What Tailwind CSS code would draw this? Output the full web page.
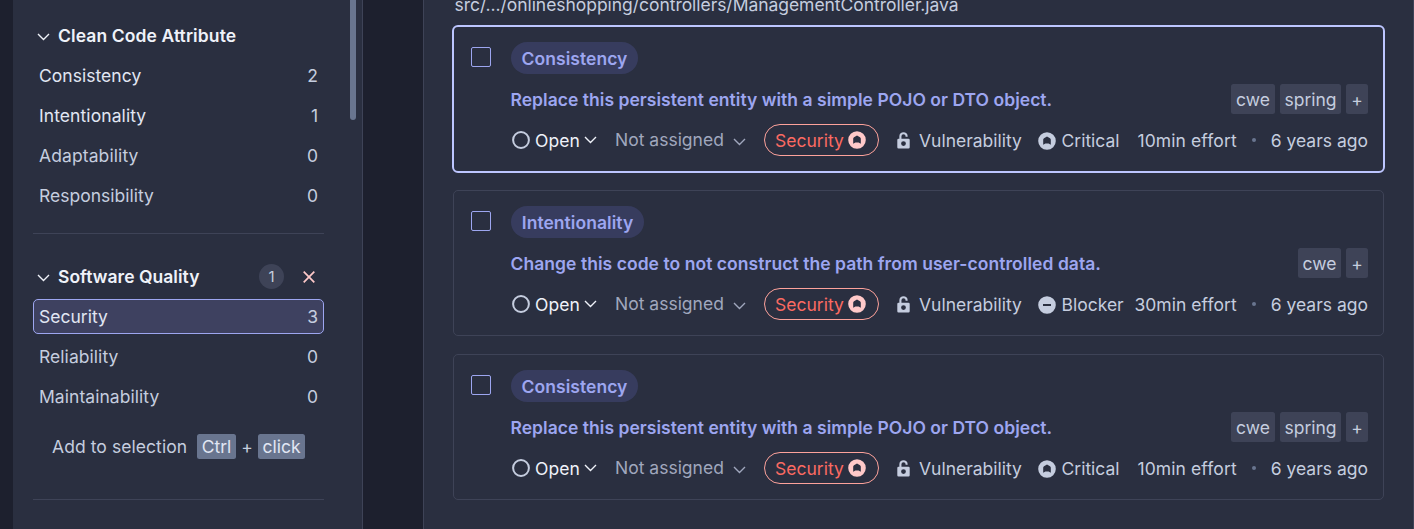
<!DOCTYPE html>
<html lang="en">
<head>
<meta charset="utf-8">
<title>Issues</title>
<script src="https://cdn.jsdelivr.net/npm/@tailwindcss/browser@4"></script>
</head>
<body class="h-[529px] overflow-hidden bg-[#1d202e] font-['Inter',sans-serif] text-[17.5px] leading-[25px] text-[#c5cddf]">
<svg class="hidden">
  <symbol id="chev" viewBox="0 0 14 10"><path d="M1 2 L6.500 7.500 L12 2" fill="none" stroke="currentColor" stroke-width="1.400"/></symbol>
  <symbol id="high" viewBox="0 0 18 18"><path fill="currentColor" fill-rule="evenodd" d="M9 .2a8.800 8.800 0 1 1 0 17.600a8.800 8.800 0 0 1 0-17.600zM9 4.600L6 6.300Q5.200 6.800 5.200 7.800V12.700L7.400 11.500H10.600L12.800 12.700V7.800Q12.800 6.800 12 6.300z"/></symbol>
  <symbol id="block" viewBox="0 0 18 18"><path fill="currentColor" fill-rule="evenodd" d="M9 .2a8.800 8.800 0 1 1 0 17.600a8.800 8.800 0 0 1 0-17.600zM5 8v2h8V8z"/></symbol>
  <symbol id="lock" viewBox="0 0 13 17"><path fill="currentColor" fill-rule="evenodd" d="M1.500 6.700H11.500Q12.700 6.700 12.700 7.900V15.300Q12.700 16.500 11.500 16.500H1.500Q.3 16.500 .3 15.300V7.900Q.3 6.700 1.500 6.700zM6.500 9.200a2.400 2.400 0 1 0 0 4.800a2.400 2.400 0 0 0 0-4.800z"/><path d="M3.400 7.500V4.300a3.100 3.100 0 0 1 6.200 0V4.800" fill="none" stroke="currentColor" stroke-width="2.100"/></symbol>
  <symbol id="ring" viewBox="0 0 18 18"><circle cx="9" cy="9" r="7.900" fill="none" stroke="currentColor" stroke-width="2"/></symbol>
</svg>
<div class="flex h-full">
  <aside class="ml-[13px] flex h-full w-[350px] shrink-0 border-r border-[#3e4357] bg-[#2a2f40] pl-5">
    <div class="w-[291px]">
      <section class="h-[234px] border-b border-[#3e4357] pt-[18px]">
        <h2 class="flex h-[35px] items-center pl-1 font-semibold tracking-[0.1px] text-[#eff2f9]"><svg class="mt-[3px] mr-[7px] h-[10px] w-[14px]"><use href="#chev"/></svg>Clean Code Attribute</h2>
        <ul class="mt-[5px] flex flex-col gap-[5px]">
          <li class="flex h-[35px] items-center justify-between px-[6px]"><span class="tracking-[0.03px] text-[#e1e6f3]">Consistency</span><span>2</span></li>
          <li class="flex h-[35px] items-center justify-between px-[6px]"><span class="tracking-[0.08px] text-[#e1e6f3]">Intentionality</span><span>1</span></li>
          <li class="flex h-[35px] items-center justify-between px-[6px]"><span class="tracking-[0.1px]">Adaptability</span><span>0</span></li>
          <li class="flex h-[35px] items-center justify-between px-[6px]"><span>Responsibility</span><span>0</span></li>
        </ul>
      </section>
      <section class="h-[266px] border-b border-[#3e4357] pt-[25px]">
        <h2 class="flex h-[35px] items-center pl-1 font-semibold tracking-[0.03px] text-[#eff2f9]"><svg class="mt-[3px] mr-[7px] h-[10px] w-[14px]"><use href="#chev"/></svg>Software Quality
          <span class="ml-auto flex size-[25px] items-center justify-center rounded-full bg-[#3e4357] text-[15px] font-normal text-[#c5cddf]">1</span>
          <svg class="mr-[9px] ml-[19px] size-3 text-[#ffc9c9]" viewBox="0 0 12 12"><path d="M.7.7 11.300 11.300M11.300.7.7 11.300" stroke="currentColor" stroke-width="1.700"/></svg>
        </h2>
        <ul class="mt-[5px] flex flex-col gap-[5px]">
          <li class="flex h-[35px] items-center justify-between rounded-[5px] border border-[#9da6f0] bg-[#3e4160] px-[5px]"><span class="text-[#e1e6f3]">Security</span><span>3</span></li>
          <li class="flex h-[35px] items-center justify-between px-[6px]"><span class="tracking-[0.05px]">Reliability</span><span>0</span></li>
          <li class="flex h-[35px] items-center justify-between px-[6px]"><span class="tracking-[0.05px]">Maintainability</span><span>0</span></li>
        </ul>
        <p class="mt-5 flex items-center pl-[19px]"><span class="w-[135px] tracking-[0.07px] whitespace-nowrap">Add to selection</span><kbd class="ml-[10px] w-[39px] rounded-[2.500px] bg-[#69758f] text-center font-['Inter',sans-serif] text-[#e1e6f3]">Ctrl</kbd><span class="w-[22px] text-center">+</span><kbd class="w-[47px] rounded-[2.500px] bg-[#69758f] text-center font-['Inter',sans-serif] text-[#e1e6f3]">click</kbd></p>
      </section>
    </div>
    <div class="ml-[26px] h-[120px] w-[6px] rounded-b-full bg-[#69758f]"></div>
  </aside>

  <main class="ml-[60px] h-full w-[991px] shrink-0 border-x border-[#3e4357] bg-[#2a2f40] pl-[29px]">
    <div class="-mt-[8px] ml-[1.500px] h-[25px] tracking-[-0.045px]">src/.../onlineshopping/controllers/ManagementController.java</div>
    <div class="mt-[9px] flex w-[931px] flex-col gap-[18px]">
      <article class="h-[146px] rounded-[5px] px-[16px] pt-4 outline-2 -outline-offset-1 outline-[#bdc6ff]">
        <div class="flex h-8 pl-[2px]"><span class="mt-[5px] size-5 rounded-[2px] border border-[#9da6f0]"></span><span class="ml-5 w-[127px] rounded-full bg-[#373c5e] pt-px text-center leading-8 font-semibold tracking-[0.05px] text-[#9da6f0]">Consistency</span></div>
        <div class="mt-[10px] flex h-[30px] items-center gap-[5px] pl-[41.500px]"><h3 class="mr-auto font-semibold tracking-[0.03px] text-[#9da6f0]">Replace this persistent entity with a simple POJO or DTO object.</h3><span class="h-[30px] rounded-[2.500px] bg-[#3e4357] px-[5px] leading-[32px]">cwe</span><span class="h-[30px] w-[61px] rounded-[2.500px] bg-[#3e4357] text-center leading-[32px]">spring</span><span class="h-[30px] w-[22px] rounded-[2.500px] bg-[#3e4357] text-center leading-[32px]">+</span></div>
        <div class="mt-[10px] flex h-8 items-center pl-[43px]">
          <svg class="mr-[5px] size-[18px]"><use href="#ring"/></svg><span class="w-[45px] tracking-[0.1px] text-[#eff2f9]">Open</span><svg class="mr-[17px] ml-[4px] h-[10px] w-[14px] text-[#eff2f9]"><use href="#chev"/></svg>
          <span class="w-[118px] -translate-y-px text-[#a0a7bd]">Not assigned</span><svg class="mt-[3px] mr-[17px] h-[10px] w-[14px] text-[#a0a7bd]"><use href="#chev"/></svg>
          <span class="flex h-8 w-[115px] items-center rounded-full border border-[#fda29b] pl-[10px] text-[#fb6a62]"><span class="w-[73px]">Security</span><svg class="size-[18px] text-[#ffc9c9]"><use href="#high"/></svg></span>
          <svg class="mr-[9px] ml-[18px] h-[17px] w-[13px]"><use href="#lock"/></svg><span class="w-[119px]">Vulnerability</span>
          <svg class="mt-[2px] mr-[5.500px] size-[18px]"><use href="#high"/></svg><span>Critical</span>
          <span class="ml-auto tracking-[0.1px]">10min effort</span><span class="mr-[15px] ml-[15px] size-1 rounded-full bg-[#69758f]"></span><span>6 years ago</span>
        </div>
      </article>
      <article class="h-[146px] rounded-[5px] border border-[#3e4357] px-[15px] pt-[15px]">
        <div class="flex h-8 pl-[2px]"><span class="mt-[5px] size-5 rounded-[2px] border border-[#9da6f0]"></span><span class="ml-5 w-[133px] rounded-full bg-[#373c5e] pt-px text-center leading-8 font-semibold tracking-[0.05px] text-[#9da6f0]">Intentionality</span></div>
        <div class="mt-[10px] flex h-[30px] items-center gap-[5px] pl-[41.500px]"><h3 class="mr-auto font-semibold tracking-[0.05px] text-[#9da6f0]">Change this code to not construct the path from user-controlled data.</h3><span class="h-[30px] w-[43px] rounded-[2.500px] bg-[#3e4357] text-center leading-[32px]">cwe</span><span class="h-[30px] w-[22px] rounded-[2.500px] bg-[#3e4357] text-center leading-[32px]">+</span></div>
        <div class="mt-[10px] flex h-8 items-center pl-[43px]">
          <svg class="mr-[5px] size-[18px]"><use href="#ring"/></svg><span class="w-[45px] tracking-[0.1px] text-[#eff2f9]">Open</span><svg class="mr-[17px] ml-[4px] h-[10px] w-[14px] text-[#eff2f9]"><use href="#chev"/></svg>
          <span class="w-[118px] -translate-y-px text-[#a0a7bd]">Not assigned</span><svg class="mt-[3px] mr-[17px] h-[10px] w-[14px] text-[#a0a7bd]"><use href="#chev"/></svg>
          <span class="flex h-8 w-[115px] items-center rounded-full border border-[#fda29b] pl-[10px] text-[#fb6a62]"><span class="w-[73px]">Security</span><svg class="size-[18px] text-[#ffc9c9]"><use href="#high"/></svg></span>
          <svg class="mr-[9px] ml-[18px] h-[17px] w-[13px]"><use href="#lock"/></svg><span class="w-[119px]">Vulnerability</span>
          <svg class="mt-[2px] mr-[5.500px] size-[18px]"><use href="#block"/></svg><span>Blocker</span>
          <span class="ml-auto tracking-[0.05px]">30min effort</span><span class="mr-[15px] ml-[15px] size-1 rounded-full bg-[#69758f]"></span><span>6 years ago</span>
        </div>
      </article>
      <article class="h-[146px] rounded-[5px] border border-[#3e4357] px-[15px] pt-[15px]">
        <div class="flex h-8 pl-[2px]"><span class="mt-[5px] size-5 rounded-[2px] border border-[#9da6f0]"></span><span class="ml-5 w-[127px] rounded-full bg-[#373c5e] pt-px text-center leading-8 font-semibold tracking-[0.05px] text-[#9da6f0]">Consistency</span></div>
        <div class="mt-[10px] flex h-[30px] items-center gap-[5px] pl-[41.500px]"><h3 class="mr-auto font-semibold tracking-[0.03px] text-[#9da6f0]">Replace this persistent entity with a simple POJO or DTO object.</h3><span class="h-[30px] rounded-[2.500px] bg-[#3e4357] px-[5px] leading-[32px]">cwe</span><span class="h-[30px] w-[61px] rounded-[2.500px] bg-[#3e4357] text-center leading-[32px]">spring</span><span class="h-[30px] w-[22px] rounded-[2.500px] bg-[#3e4357] text-center leading-[32px]">+</span></div>
        <div class="mt-[10px] flex h-8 items-center pl-[43px]">
          <svg class="mr-[5px] size-[18px]"><use href="#ring"/></svg><span class="w-[45px] tracking-[0.1px] text-[#eff2f9]">Open</span><svg class="mr-[17px] ml-[4px] h-[10px] w-[14px] text-[#eff2f9]"><use href="#chev"/></svg>
          <span class="w-[118px] -translate-y-px text-[#a0a7bd]">Not assigned</span><svg class="mt-[3px] mr-[17px] h-[10px] w-[14px] text-[#a0a7bd]"><use href="#chev"/></svg>
          <span class="flex h-8 w-[115px] items-center rounded-full border border-[#fda29b] pl-[10px] text-[#fb6a62]"><span class="w-[73px]">Security</span><svg class="size-[18px] text-[#ffc9c9]"><use href="#high"/></svg></span>
          <svg class="mr-[9px] ml-[18px] h-[17px] w-[13px]"><use href="#lock"/></svg><span class="w-[119px]">Vulnerability</span>
          <svg class="mt-[2px] mr-[5.500px] size-[18px]"><use href="#high"/></svg><span>Critical</span>
          <span class="ml-auto tracking-[0.1px]">10min effort</span><span class="mr-[15px] ml-[15px] size-1 rounded-full bg-[#69758f]"></span><span>6 years ago</span>
        </div>
      </article>
    </div>
  </main>
</div>
</body>
</html>
